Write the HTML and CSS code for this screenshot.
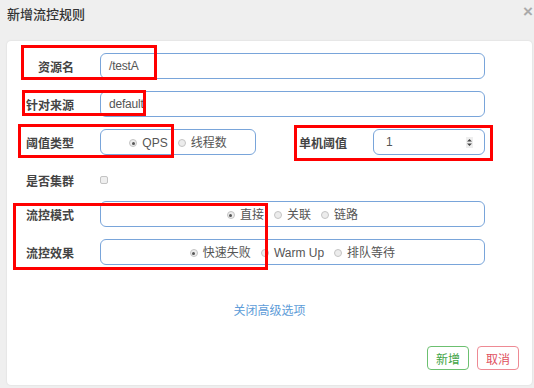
FILE: index.html
```html
<!DOCTYPE html>
<html lang="zh-CN">
<head>
  <meta charset="UTF-8" />
  <meta name="viewport" content="width=device-width, initial-scale=1.0"/>
  <title>新增流控规则</title>
  <link rel="stylesheet" href="styles.css">
</head>

<body>
  <div class="dialog">
    <div class="dialog-head">
      <span class="dialog-title">新增流控规则</span>
      <span class="dialog-close">×</span>
    </div>

    <div class="card">
      <div class="form">
        <div class="row">
          <div class="row-label">资源名</div>
          <div class="field"><div class="text-input">/testA</div></div>
        </div>

        <div class="row">
          <div class="row-label">针对来源</div>
          <div class="field"><div class="text-input">default</div></div>
        </div>

        <div class="row">
          <div class="row-label">阈值类型</div>
          <div class="field">
            <div class="choice-box choice-box-small">
              <span class="choice"><span class="radio checked"></span>QPS</span>
              <span class="choice"><span class="radio"></span>线程数</span>
            </div>
            <div class="row-label side-label">单机阈值</div>
            <div class="text-input number-input">
              <span>1</span>
              <span class="spinner">
                <svg width="7" height="11" viewBox="0 0 7 11"><path d="M3.5 2 L6 4.5 H1 Z M3.5 9 L6 6.5 H1 Z" fill="#444"/></svg>
              </span>
            </div>
          </div>
        </div>

        <div class="row row-check">
          <div class="row-label">是否集群</div>
          <div class="field"><span class="checkbox"></span></div>
        </div>

        <div class="row">
          <div class="row-label">流控模式</div>
          <div class="field">
            <div class="choice-box">
              <span class="choice"><span class="radio checked"></span>直接</span>
              <span class="choice"><span class="radio"></span>关联</span>
              <span class="choice"><span class="radio"></span>链路</span>
            </div>
          </div>
        </div>

        <div class="row">
          <div class="row-label">流控效果</div>
          <div class="field">
            <div class="choice-box">
              <span class="choice"><span class="radio checked"></span>快速失败</span>
              <span class="choice"><span class="radio"></span>Warm Up</span>
              <span class="choice"><span class="radio"></span>排队等待</span>
            </div>
          </div>
        </div>
      </div>

      <div class="more"><a href="#">关闭高级选项</a></div>

      <div class="actions">
        <button class="btn btn-add">新增</button>
        <button class="btn btn-cancel">取消</button>
      </div>
    </div>

    <!-- red annotation frames -->
    <div class="mark mark-name"></div>
    <div class="mark mark-origin"></div>
    <div class="mark mark-grade"></div>
    <div class="mark mark-count"></div>
    <div class="mark mark-strategy"></div>
  </div>
</body>
</html>
```

FILE: styles.css
```css
* {
  box-sizing: border-box;
}

body {
  margin: 0;
  background: #efefef;
  font-family: "Liberation Sans", "Noto Sans CJK SC", sans-serif;
  font-size: 12px;
  color: #555;
}

.dialog {
  position: relative;
  width: 534px;
  height: 388px;
  overflow: hidden;
}

.dialog-head {
  display: flex;
  justify-content: space-between;
  align-items: flex-start;
  height: 41px;
  padding: 6px 0 0 7px;
}

.dialog-title {
  font-size: 13px;
  line-height: 18px;
  color: #333;
  font-weight: 500;
}

.dialog-close {
  font-size: 17px;
  line-height: 12px;
  color: #aaa;
  font-weight: 700;
  margin-right: 1px;
}

.card {
  margin-left: 7px;
  width: 525px;
  height: 344px;
  background: #fff;
  border-radius: 4px;
  box-shadow: 0 0 2px rgba(0, 0, 0, 0.12);
  padding: 12px 0 15px;
  display: flex;
  flex-direction: column;
}

.form {
  padding-right: 47px;
}

.row {
  display: flex;
  align-items: center;
  height: 26px;
  margin-bottom: 12px;
}

.row-check {
  margin-top: 2px;
  margin-bottom: 8px;
}

.row-label {
  width: 67px;
  margin-right: 26px;
  padding-top: 4px;
  text-align: right;
  font-weight: 700;
  color: #444;
  line-height: 16px;
  white-space: nowrap;
}

.side-label {
  width: auto;
  margin-left: 43px;
  margin-right: 26px;
}

.field {
  flex: 1;
  display: flex;
  align-items: center;
  height: 100%;
}

.text-input {
  flex: 1;
  height: 26px;
  border: 1px solid #79a5da;
  border-radius: 6px;
  padding: 0 8px;
  display: flex;
  align-items: center;
  line-height: 14px;
  letter-spacing: -0.2px;
  color: #555;
}

.number-input {
  width: 112px;
  flex: none;
  justify-content: space-between;
  padding: 0 11px 0 12px;
}

.spinner {
  display: flex;
  width: 7px;
  height: 11px;
  background: #eee;
}

.choice-box {
  flex: 1;
  height: 26px;
  border: 1px solid #79a5da;
  border-radius: 6px;
  display: flex;
  justify-content: center;
  align-items: center;
  padding-top: 2px;
  line-height: 14px;
  color: #555;
}

.choice-box-small {
  flex: none;
  width: 156px;
}

.choice {
  display: flex;
  align-items: center;
  gap: 5px;
  margin: 0 5px;
  white-space: nowrap;
}

.radio {
  width: 8px;
  height: 8px;
  border: 1px solid #c4c4c4;
  border-radius: 50%;
  background: #ececec;
  display: flex;
  align-items: center;
  justify-content: center;
}

.radio.checked::after {
  content: "";
  width: 3px;
  height: 3px;
  border-radius: 50%;
  background: #555;
}

.checkbox {
  width: 8px;
  height: 8px;
  border: 1px solid #c4c4c4;
  border-radius: 2px;
  background: #efefef;
}

.more {
  margin-top: 26px;
  text-align: center;
  line-height: 16px;
}

.more a {
  color: #5d9cd8;
  text-decoration: none;
}

.actions {
  margin-top: auto;
  display: flex;
  justify-content: flex-end;
  gap: 8px;
  padding-right: 13px;
}

.btn {
  width: 42px;
  height: 24px;
  background: #fff;
  border-radius: 4px;
  font-family: inherit;
  font-size: 12px;
  padding: 0;
  cursor: pointer;
}

.btn-add {
  border: 1px solid #6cc070;
  color: #3fa445;
}

.btn-cancel {
  border: 1px solid #ee8a94;
  color: #e0505e;
}

.mark {
  position: absolute;
  border: 3px solid #ff0000;
}

.mark-name { left: 21px; top: 45px; width: 136px; height: 35px; }
.mark-origin { left: 22px; top: 90px; width: 124px; height: 26px; }
.mark-grade { left: 18px; top: 124px; width: 156px; height: 34px; }
.mark-count { left: 294px; top: 125px; width: 199px; height: 36px; }
.mark-strategy { left: 13px; top: 203px; width: 255px; height: 67px; }
```
